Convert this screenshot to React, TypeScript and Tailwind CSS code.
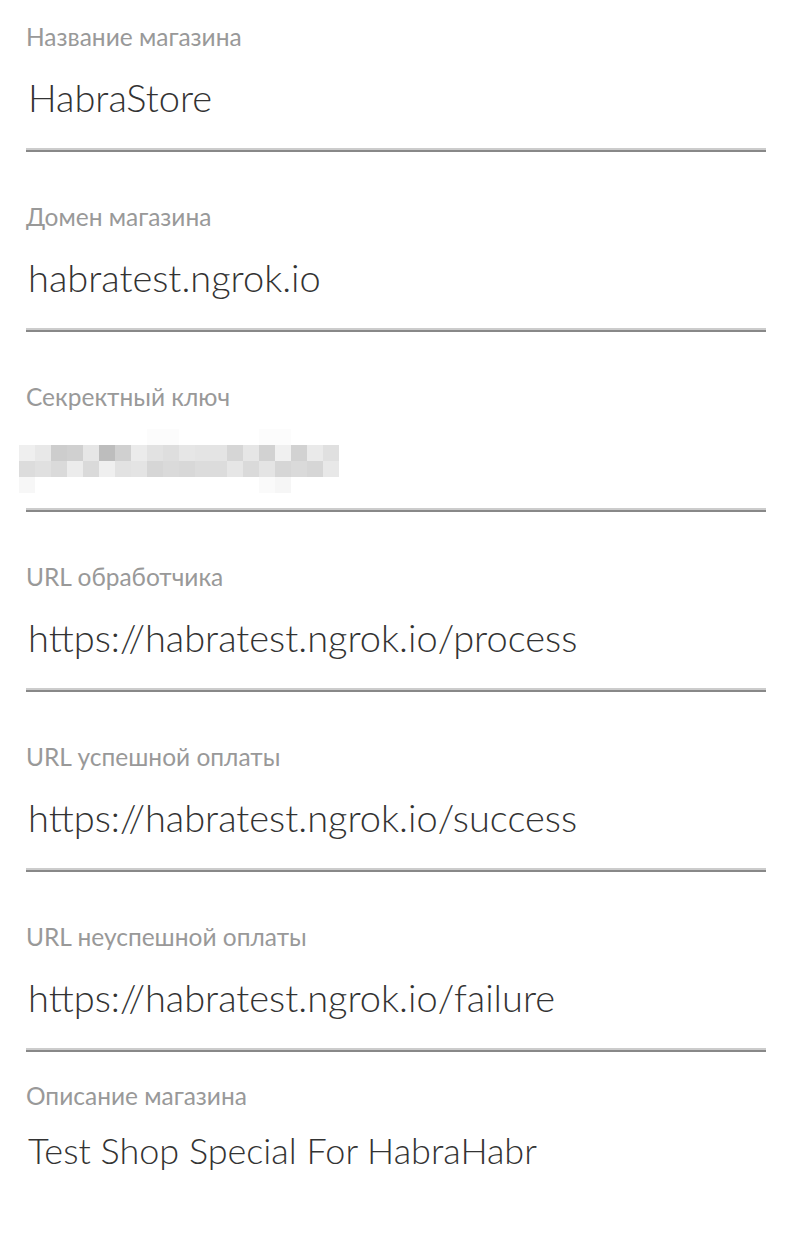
import React from "react";

interface FieldProps {
  label: string;
  value?: string;
  secret?: boolean;
  last?: boolean;
}

// blurred secret key, 16px blocks (first and last rows are the faint edges)
const mosaic: string[][] = [
  ["#fff", "#fff", "#fff", "#fff", "#fff", "#fff", "#fff", "#fff", "#fcfcfc", "#fcfcfc", "#fff", "#fff", "#fff", "#fff", "#fff", "#fcfcfc", "#fcfcfc", "#fff", "#fff", "#fff"],
  ["#efefef", "#e8e8e8", "#cdcdcd", "#d0d0d0", "#e6e6e6", "#bdbdbd", "#d0d0d0", "#ebebeb", "#e2e2e2", "#dedede", "#e6e6e6", "#e4e4e4", "#e4e4e4", "#d6d6d6", "#e6e6e6", "#d2d2d2", "#f0f0f0", "#d2d2d2", "#eaeaea", "#e0e0e0"],
  ["#dcdcdc", "#e0e0e0", "#dadada", "#ececec", "#dadada", "#efefef", "#e2e2e2", "#e4e4e4", "#d6d6d6", "#dadada", "#d8d8d8", "#dcdcdc", "#dcdcdc", "#e6e6e6", "#dadada", "#e4e4e4", "#d6d6d6", "#dadada", "#d6d6d6", "#e8e8e8"],
  ["#f7f7f7", "#fff", "#fff", "#fff", "#fff", "#fff", "#fff", "#fff", "#fff", "#fff", "#fff", "#fff", "#fff", "#fff", "#fff", "#fafafa", "#f6f6f6", "#fff", "#fff", "#fff"],
];

function SecretMosaic() {
  return (
    <div className="-mt-[6px] -ml-[9px] flex flex-col">
      {mosaic.map((row, r) => (
        <div key={r} className="flex">
          {row.map((c, i) => (
            <div key={i} className="w-4 h-4" style={{ backgroundColor: c }} />
          ))}
        </div>
      ))}
    </div>
  );
}

function Field({ label, value, secret, last }: FieldProps) {
  return (
    <div
      className={
        last
          ? "h-[168px] ml-[26px] w-[740px] flex flex-col pt-[1px]"
          : "h-[180px] ml-[26px] w-[740px] flex flex-col pt-[22px]"
      }
    >
      <div className="text-[24.5px] leading-[1.2] text-[#999999] font-normal">
        {label}
      </div>
      {last ? (
        <div className="mt-[19px] text-[36px] leading-[1.2] font-light text-[#333333] pl-[2px] whitespace-nowrap">
          {value}
        </div>
      ) : (
        <div className="mt-[24px] h-[46px] text-[38px] leading-[1.2] font-light text-[#333333] pl-[2px] whitespace-nowrap">
          {secret ? <SecretMosaic /> : value}
        </div>
      )}
      {!last && (
        <div className="mt-[27px] border-t-2 border-b-2 border-t-[#cccccc] border-b-[#888888]" />
      )}
    </div>
  );
}

export default function App() {
  return (
    <div
      className="w-[796px] h-[1248px] bg-white overflow-hidden"
      style={{ fontFamily: "Lato, 'Noto Sans', sans-serif" }}
    >
      <Field label="Название магазина" value="HabraStore" />
      <Field label="Домен магазина" value="habratest.ngrok.io" />
      <Field label="Секректный ключ" secret />
      <Field label="URL обработчика" value="https://habratest.ngrok.io/process" />
      <Field label="URL успешной оплаты" value="https://habratest.ngrok.io/success" />
      <Field label="URL неуспешной оплаты" value="https://habratest.ngrok.io/failure" />
      <Field label="Описание магазина" value="Test Shop Special For HabraHabr" last />
    </div>
  );
}
